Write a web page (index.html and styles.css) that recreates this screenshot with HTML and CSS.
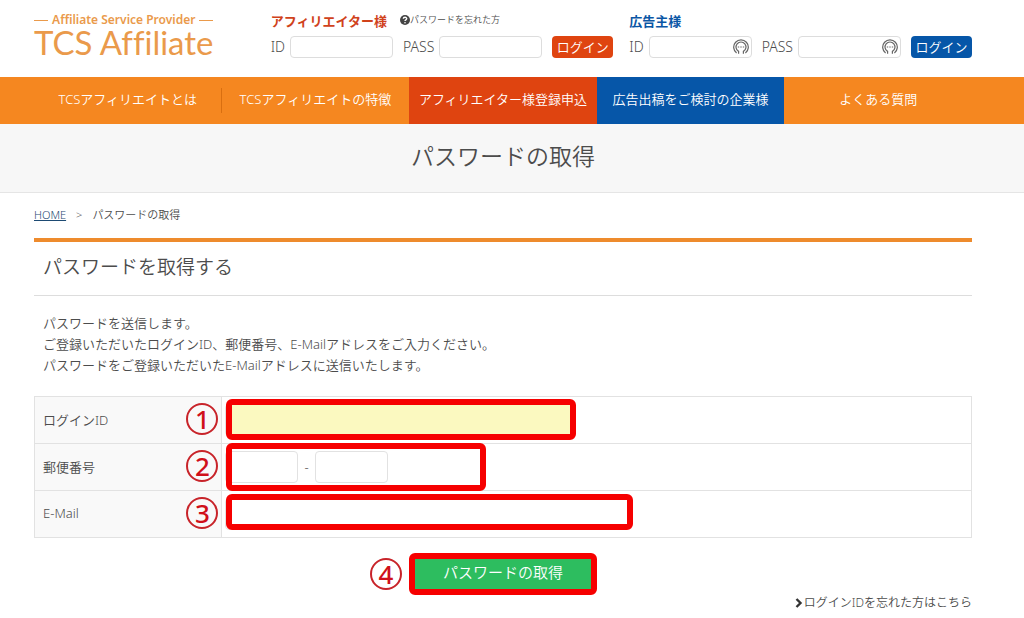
FILE: index.html
```html
<!DOCTYPE html>
<html lang="ja">

<head>
    <meta charset="utf-8">
    <title>パスワードの取得</title>
    <link rel="stylesheet" href="styles.css">
</head>

<body>
    <header class="header">
        <a class="logo" href="#">
            <span class="logo-sub">Affiliate Service Provider</span>
            <span class="logo-main">TCS Affiliate</span>
        </a>

        <div class="logins">
            <form class="login">
                <div class="login-head">
                    <strong class="login-title">アフィリエイター様</strong>
                    <a class="forgot" href="#">
                        <svg width="10" height="10" viewBox="0 0 10 10">
                            <circle cx="5" cy="5" r="5" fill="#444" />
                            <path d="M3.3 3.8C3.4 1.7 6.8 1.8 6.7 3.8C6.6 4.9 5.1 4.8 5 6" fill="none" stroke="#fff" stroke-width="1.4" />
                            <circle cx="5" cy="7.7" r="0.8" fill="#fff" />
                        </svg>パスワードを忘れた方</a>
                </div>
                <div class="login-row">
                    <label for="affId">ID</label>
                    <span class="login-field"><input type="text" id="affId"></span>
                    <label class="pass" for="affPass">PASS</label>
                    <span class="login-field"><input type="password" id="affPass"></span>
                    <button type="submit">ログイン</button>
                </div>
            </form>

            <form class="login login-client">
                <div class="login-head">
                    <strong class="login-title">広告主様</strong>
                </div>
                <div class="login-row">
                    <label for="cliId">ID</label>
                    <span class="login-field">
                        <input type="text" id="cliId">
                        <svg class="key" width="16" height="16" viewBox="0 0 16 16" fill="none" stroke="#666">
                            <path d="M3.6 14A7.3 7.3 0 1 1 12.4 14" stroke-width="1.2" />
                            <path d="M5.6 14.8V12.4A5 5 0 1 1 10.4 12.4V14.8" stroke-width="1.2" />
                            <path d="M4.8 8H11.2" stroke-width="1.2" stroke-dasharray="1.4 1.1" />
                        </svg>
                    </span>
                    <label class="pass" for="cliPass">PASS</label>
                    <span class="login-field">
                        <input type="password" id="cliPass">
                        <svg class="key" width="16" height="16" viewBox="0 0 16 16" fill="none" stroke="#666">
                            <path d="M3.6 14A7.3 7.3 0 1 1 12.4 14" stroke-width="1.2" />
                            <path d="M5.6 14.8V12.4A5 5 0 1 1 10.4 12.4V14.8" stroke-width="1.2" />
                            <path d="M4.8 8H11.2" stroke-width="1.2" stroke-dasharray="1.4 1.1" />
                        </svg>
                    </span>
                    <button type="submit">ログイン</button>
                </div>
            </form>
        </div>
    </header>

    <nav class="nav">
        <a class="divided" href="#">TCSアフィリエイトとは</a>
        <a href="#">TCSアフィリエイトの特徴</a>
        <a class="nav-red" href="#">アフィリエイター様登録申込</a>
        <a class="nav-blue" href="#">広告出稿をご検討の企業様</a>
        <a href="#">よくある質問</a>
    </nav>

    <h1 class="page-title">パスワードの取得</h1>

    <main class="main">
        <div class="breadcrumb">
            <a href="#">HOME</a>
            <span>&gt;</span>
            <span>パスワードの取得</span>
        </div>

        <h2 class="section-title">パスワードを取得する</h2>

        <p class="lead">
            パスワードを送信します。<br>
            ご登録いただいたログインID、郵便番号、E-Mailアドレスをご入力ください。<br>
            パスワードをご登録いただいたE-Mailアドレスに送信いたします。
        </p>

        <form>
            <table class="form-table">
                <tr>
                    <th>
                        <div class="th-inner"><label for="loginId">ログインID</label><span class="num">1</span></div>
                    </th>
                    <td>
                        <input class="input-id" type="text" id="loginId">
                        <span class="frame frame-id"></span>
                    </td>
                </tr>
                <tr>
                    <th>
                        <div class="th-inner"><label for="zip1">郵便番号</label><span class="num">2</span></div>
                    </th>
                    <td>
                        <div class="zip">
                            <input class="input-zip" type="text" id="zip1">
                            <span>-</span>
                            <input class="input-zip" type="text" id="zip2" aria-label="郵便番号">
                        </div>
                        <span class="frame frame-zip"></span>
                    </td>
                </tr>
                <tr>
                    <th>
                        <div class="th-inner"><label for="email">E-Mail</label><span class="num">3</span></div>
                    </th>
                    <td>
                        <input class="input-mail" type="email" id="email">
                        <span class="frame frame-mail"></span>
                    </td>
                </tr>
            </table>

            <div class="submit-row">
                <span class="num">4</span>
                <button class="submit" type="submit">パスワードの取得</button>
            </div>
        </form>

        <a class="forgot-id" href="#">
            <svg width="8" height="10" viewBox="0 0 8 10">
                <path d="M1.5 1L5.5 5L1.5 9" fill="none" stroke="#333" stroke-width="2.4" />
            </svg>ログインIDを忘れた方はこちら</a>
    </main>
</body>

</html>
```

FILE: styles.css
```css
* {
    box-sizing: border-box;
}

body {
    margin: 0;
    font-family: "Noto Sans", "Noto Sans CJK JP", sans-serif;
    font-size: 13px;
    font-weight: 350;
    color: #4c4c4c;
    background-color: #fff;
}

a {
    color: inherit;
    text-decoration: none;
}

input,
button {
    font-family: inherit;
    font-weight: inherit;
}

/* Header */
.header {
    display: flex;
    justify-content: space-between;
    height: 77px;
    padding: 12px 52px 0 34px;
}

.logo {
    display: flex;
    flex-direction: column;
    color: #ea9a4b;
}

.logo-sub {
    display: flex;
    align-items: center;
    gap: 4px;
    font-size: 12px;
    font-weight: 600;
    line-height: 16px;
}

.logo-sub::before,
.logo-sub::after {
    content: "";
    flex: 1;
    height: 1px;
    background-color: #ea9a4b;
}

.logo-main {
    font-family: Lato, sans-serif;
    font-size: 33px;
    font-weight: 400;
    font-variant-ligatures: none;
    line-height: 28px;
}

.logins {
    display: flex;
    gap: 16px;
}

.login-head {
    display: flex;
    align-items: center;
    gap: 13px;
    height: 16px;
}

.login-title {
    font-size: 13px;
    font-weight: 700;
    color: #d0421b;
}

.login-client .login-title {
    color: #0a56a5;
}

.forgot {
    display: flex;
    align-items: center;
    font-size: 9px;
    line-height: 16px;
}

.login-row {
    display: flex;
    align-items: center;
    margin-top: 8px;
}

.login-row label {
    font-size: 14px;
    line-height: 20px;
}

.login-row .pass {
    margin-left: 10px;
}

.login-field {
    position: relative;
    display: flex;
    margin-left: 5px;
}

.login-field input {
    width: 103px;
    height: 22px;
    border: 1px solid #ddd;
    border-radius: 4px;
}

.key {
    position: absolute;
    top: 3px;
    right: 3px;
}

.login button {
    width: 61px;
    height: 22px;
    margin-left: 10px;
    padding: 0;
    border: none;
    border-radius: 4px;
    background-color: #df4410;
    color: #fff;
    font-size: 13px;
    line-height: 20px;
    cursor: pointer;
}

.login-client button {
    background-color: #0656a8;
}

/* Navigation */
.nav {
    display: grid;
    grid-template-columns: repeat(5, 1fr);
    height: 47px;
    padding: 0 52px 0 34px;
    background-color: #f58720;
    color: #fff;
}

.nav a {
    position: relative;
    text-align: center;
    line-height: 44px;
    white-space: nowrap;
}

.nav .divided::after {
    content: "";
    position: absolute;
    top: 11px;
    right: 0;
    width: 1px;
    height: 25px;
    background-color: #d96f10;
}

.nav .nav-red {
    background-color: #df4410;
}

.nav .nav-blue {
    background-color: #0656a8;
}

.page-title {
    height: 69px;
    margin: 0;
    padding: 0 52px 0 34px;
    border-bottom: 1px solid #e5e5e5;
    background-color: #f7f7f7;
    font-size: 23px;
    font-weight: 350;
    line-height: 64px;
    text-align: center;
}

/* Content */
.main {
    padding: 14px 52px 0 34px;
}

.breadcrumb {
    display: flex;
    gap: 10px;
    font-size: 11px;
    line-height: 16px;
}

.breadcrumb a {
    color: #1d4a73;
    text-decoration: underline;
}

.section-title {
    height: 58px;
    margin: 15px 0 17px;
    padding-left: 9px;
    border-top: 4px solid #ee8b2d;
    border-bottom: 1px solid #ddd;
    font-size: 19px;
    font-weight: 350;
    line-height: 50px;
}

.lead {
    margin: 0 0 20px;
    padding-left: 9px;
    line-height: 21px;
}

.form-table {
    width: 100%;
    border-collapse: collapse;
}

.form-table th,
.form-table td {
    position: relative;
    height: 47px;
    padding: 0 3px;
    border: 1px solid #e2e2e2;
}

.form-table th {
    width: 20%;
    padding: 0 3px 2px 8px;
    background-color: #f9f9f9;
    font-weight: 350;
}

.th-inner {
    display: flex;
    align-items: center;
    justify-content: space-between;
}

/* Step numbers */
.num {
    width: 32px;
    height: 32px;
    border: 2px solid #c8242a;
    border-radius: 50%;
    color: #d0101a;
    font-size: 26px;
    font-weight: 500;
    line-height: 28px;
    text-align: center;
}

.form-table input {
    display: block;
    height: 32px;
    border: 1px solid #e2e2e2;
    border-radius: 4px;
}

.form-table .input-id {
    width: 348px;
    background-color: #fbf9c0;
}

.form-table .input-zip {
    width: 73px;
}

.form-table .input-mail {
    width: 405px;
}

.zip {
    display: flex;
    align-items: center;
    gap: 6px;
}

/* Red frames over the fields */
.frame {
    position: absolute;
    left: 4px;
    border: 6px solid #f60000;
    border-radius: 6px;
    pointer-events: none;
}

.frame-id {
    top: 2px;
    width: 350px;
    height: 41px;
}

.frame-zip {
    top: -1px;
    width: 260px;
    height: 48px;
}

.frame-mail {
    top: 3px;
    width: 407px;
    height: 36px;
}

.submit-row {
    display: grid;
    grid-template-columns: 1fr auto 1fr;
    align-items: center;
    gap: 7px;
    margin-top: 15px;
}

.submit-row .num {
    justify-self: end;
}

.submit {
    width: 188px;
    height: 42px;
    padding: 0 0 4px;
    border: 6px solid #f60000;
    border-radius: 6px;
    background-color: #2dbd5f;
    color: #fff;
    font-size: 15px;
    line-height: 24px;
    cursor: pointer;
}

.forgot-id {
    display: flex;
    align-items: center;
    justify-content: flex-end;
    gap: 1px;
    font-size: 12px;
    line-height: 16px;
}
```
